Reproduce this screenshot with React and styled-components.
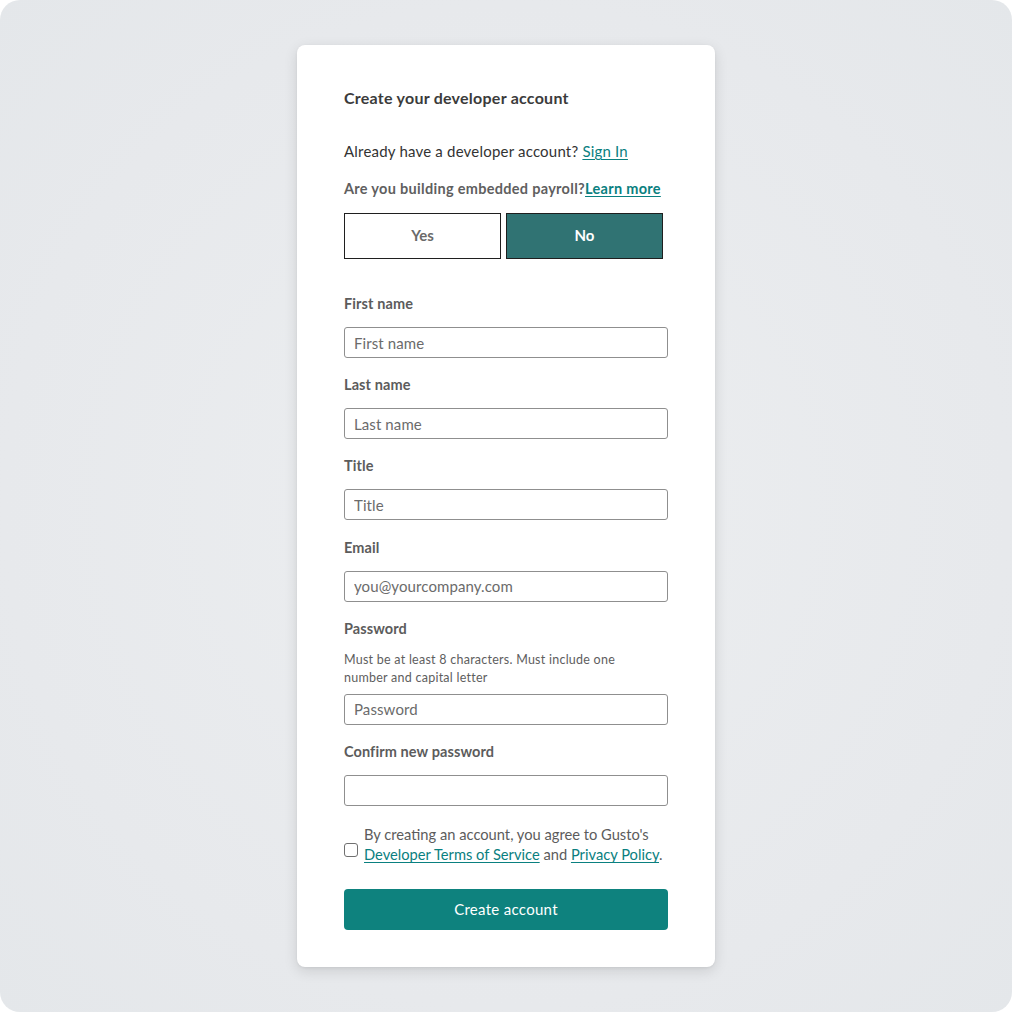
import React from "react";
import styled, { createGlobalStyle } from "styled-components";

const GlobalStyle = createGlobalStyle`
  html, body {
    margin: 0;
    padding: 0;
    background: #ffffff;
  }
  * {
    box-sizing: border-box;
  }
`;

const fields = [
  { label: "First name", placeholder: "First name" },
  { label: "Last name", placeholder: "Last name" },
  { label: "Title", placeholder: "Title" },
  { label: "Email", placeholder: "you@yourcompany.com" },
  {
    label: "Password",
    placeholder: "Password",
    hint: "Must be at least 8 characters. Must include one number and capital letter",
    type: "password",
  },
  { label: "Confirm new password", placeholder: "", type: "password" },
];

function App() {
  return (
    <>
      <GlobalStyle />
      <Backdrop>
        <Card>
          <Heading>Create your developer account</Heading>
          <SignInLine>
            Already have a developer account? <Link href="#">Sign In</Link>
          </SignInLine>
          <Question>
            Are you building embedded payroll?<BoldLink href="#">Learn more</BoldLink>
          </Question>
          <Toggle>
            <Choice type="button">Yes</Choice>
            <Choice type="button" $active>
              No
            </Choice>
          </Toggle>

          <Form>
            {fields.map((f) => (
              <Field key={f.label}>
                <Label>{f.label}</Label>
                {f.hint && <Hint>{f.hint}</Hint>}
                <Input
                  type={f.type || "text"}
                  placeholder={f.placeholder}
                  $tight={!!f.hint}
                />
              </Field>
            ))}

            <Agree>
              <Checkbox type="checkbox" />
              <AgreeText>
                By creating an account, you agree to Gusto's{" "}
                <Link href="#">Developer Terms of Service</Link> and{" "}
                <Link href="#">Privacy Policy</Link>.
              </AgreeText>
            </Agree>

            <Submit type="button">Create account</Submit>
          </Form>
        </Card>
      </Backdrop>
    </>
  );
}

export default App;

const font = `"Lato", "Noto Sans", sans-serif`;

const Backdrop = styled.div`
  min-height: 1012px;
  border-radius: 20px;
  background: radial-gradient(circle at 50% 50%, #eceef0 0%, #e7e9ec 70%, #e4e7ea 100%);
  display: flex;
  justify-content: center;
  align-items: flex-start;
  padding-top: 45px;
  font-family: ${font};
`;

const Card = styled.div`
  width: 418px;
  background: #ffffff;
  border-radius: 8px;
  box-shadow: 0 4px 14px rgba(0, 0, 0, 0.12), 0 1px 3px rgba(0, 0, 0, 0.06);
  padding: 43px 47px 37px;
  display: flex;
  flex-direction: column;
`;

const Heading = styled.h1`
  margin: 0;
  font-size: 16px;
  line-height: 20px;
  font-weight: 700;
  letter-spacing: 0.25px;
  color: #3b3b3b;
`;

const SignInLine = styled.p`
  margin: 33px 0 0;
  font-size: 15px;
  line-height: 20px;
  letter-spacing: 0.2px;
  color: #333333;
`;

const Link = styled.a`
  color: #0a8080;
  text-decoration: underline;
  text-underline-offset: 2px;
`;

const BoldLink = styled(Link)`
  font-weight: 700;
`;

const Question = styled.p`
  margin: 18px 0 0;
  font-size: 14.5px;
  line-height: 20px;
  font-weight: 700;
  letter-spacing: 0.3px;
  color: #5f5f5f;
`;

const Toggle = styled.div`
  margin-top: 14px;
  display: grid;
  grid-template-columns: 157px 157px;
  gap: 5px;
`;

const Choice = styled.button`
  height: 46px;
  padding: 0 0 3px;
  border: 1px solid #1f1f1f;
  border-radius: 0;
  background: ${(p) => (p.$active ? "#307373" : "#ffffff")};
  color: ${(p) => (p.$active ? "#ffffff" : "#6a6a6a")};
  font-family: ${font};
  font-size: 15px;
  font-weight: 700;
  cursor: pointer;
`;

const Form = styled.div`
  margin-top: 36px;
  display: flex;
  flex-direction: column;
`;

const Field = styled.div`
  display: flex;
  flex-direction: column;
  margin-bottom: 18.2px;
`;

const Label = styled.label`
  font-size: 14.5px;
  line-height: 18px;
  font-weight: 700;
  letter-spacing: 0.1px;
  color: #5c5c5c;
`;

const Hint = styled.div`
  margin-top: 13px;
  font-size: 12.5px;
  line-height: 18px;
  letter-spacing: 0.25px;
  color: #5e5e5e;
  padding-right: 30px;
`;

const Input = styled.input`
  margin-top: ${(p) => (p.$tight ? "7px" : "14px")};
  height: 31px;
  width: 100%;
  border: 1px solid #8f8f8f;
  border-radius: 3px;
  padding: 0 9px;
  font-family: ${font};
  font-size: 15px;
  letter-spacing: 0.1px;
  color: #333333;
  background: #ffffff;
  outline: none;

  &::placeholder {
    color: #6b6b6b;
  }
`;

const Agree = styled.label`
  display: flex;
  align-items: flex-start;
  gap: 6px;
`;

const Checkbox = styled.input`
  appearance: none;
  margin: 19px 0 0;
  flex: none;
  width: 14px;
  height: 14px;
  border: 1px solid #707070;
  border-radius: 3px;
  background: #ffffff;
`;

const AgreeText = styled.span`
  font-size: 14.7px;
  line-height: 20px;
  letter-spacing: 0;
  color: #5c5c5c;
`;

const Submit = styled.button`
  margin-top: 25px;
  height: 41px;
  width: 100%;
  border: none;
  border-radius: 4px;
  background: #0e827e;
  color: #ffffff;
  font-family: ${font};
  font-size: 15px;
  letter-spacing: 0.3px;
  padding: 0 0 2px;
  cursor: pointer;
`;
